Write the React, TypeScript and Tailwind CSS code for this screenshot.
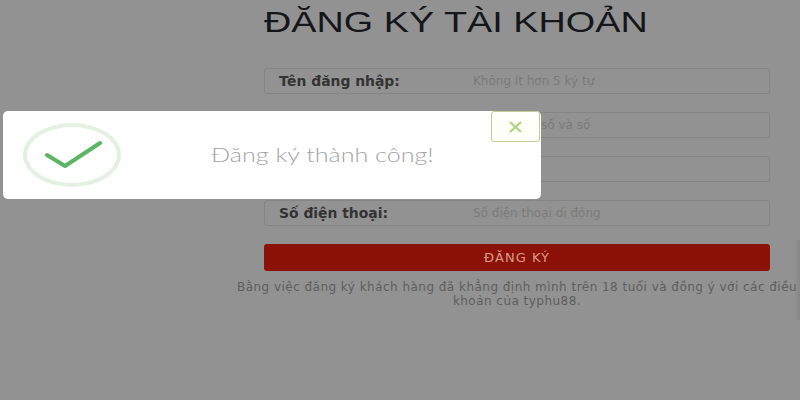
const rows = [
  { label: 'Tên đăng nhập:', hint: 'Không ít hơn 5 ký tự', hintClass: '' },
  { label: '', hint: 'số và số', hintClass: 'ml-[68px]' },
  { label: '', hint: '', hintClass: '' },
  { label: 'Số điện thoại:', hint: 'Số điện thoại di động', hintClass: '' },
]

export default function App() {
  return (
    <div className="relative h-[400px] w-[800px] overflow-hidden bg-[#929292] font-['Liberation_Sans',sans-serif]">
      <div className="ml-[264px] flex w-[506px] flex-col">
        <h1 className="mt-[2px] h-[66px] origin-left scale-x-[1.26] text-[30px] leading-[40px] text-[#14161a]">ĐĂNG KÝ TÀI KHOẢN</h1>

        <div className="flex flex-col gap-[18px]">
          {rows.map((row, i) => (
            <div
              key={i}
              className="flex h-[26px] items-center rounded-[3px] border border-[#858585] pl-[14px] font-['DejaVu_Sans',sans-serif] text-[12px]"
            >
              <span className="w-[194px] shrink-0 text-[13.9px] font-bold text-[#333333]">{row.label}</span>
              <span className={`${row.hintClass} text-[#7a7a7a]`}>{row.hint}</span>
            </div>
          ))}
        </div>

        <button className="mt-[18px] h-[27px] rounded-[3px] bg-[#8c1207] font-['DejaVu_Sans',sans-serif] text-[13px] tracking-[1px] text-[#d99a8e]">ĐĂNG KÝ</button>

        <p className="-mx-[30px] mt-[9px] text-center font-['DejaVu_Sans',sans-serif] text-[12px] leading-[14px] tracking-[0.47px] text-[#5e5e5e]">
          Bằng việc đăng ký khách hàng đã khẳng định mình trên 18 tuổi và đồng ý với các điều khoản của typhu88.
        </p>
      </div>

      {/* edge shadow */}
      <div className="absolute right-0 top-[240px] h-[80px] w-[6px] bg-gradient-to-l from-[#868686] to-transparent" />

      {/* success popup */}
      <div className="absolute left-[3px] top-[111px] flex h-[88px] w-[538px] items-center rounded-[5px] bg-white">
        <div className="ml-[20px] flex h-[64px] w-[98px] shrink-0 items-center justify-center rounded-[50%] border-[4px] border-[#e4f0e1]">
          <svg width="60" height="30" viewBox="0 0 60 30" fill="none">
            <path d="M5 15 L23 26 L58 3" stroke="#5cb562" strokeWidth="4" strokeLinecap="round" strokeLinejoin="round" />
          </svg>
        </div>
        <p className="ml-[90px] origin-left scale-x-[1.32] whitespace-nowrap font-['Lato',sans-serif] text-[19px] font-light text-[#a3a3a3]">Đăng ký thành công!</p>
        <button className="absolute right-px top-0 flex h-[31px] w-[49px] items-center justify-center rounded-[3px] border border-[#c3cc9c] bg-[#fdfff8]">
          <svg width="13" height="12" viewBox="0 0 13 12" fill="none">
            <path d="M1 1 L12 11 M12 1 L1 11" stroke="#a9d67c" strokeWidth="2" />
          </svg>
        </button>
      </div>
    </div>
  )
}
